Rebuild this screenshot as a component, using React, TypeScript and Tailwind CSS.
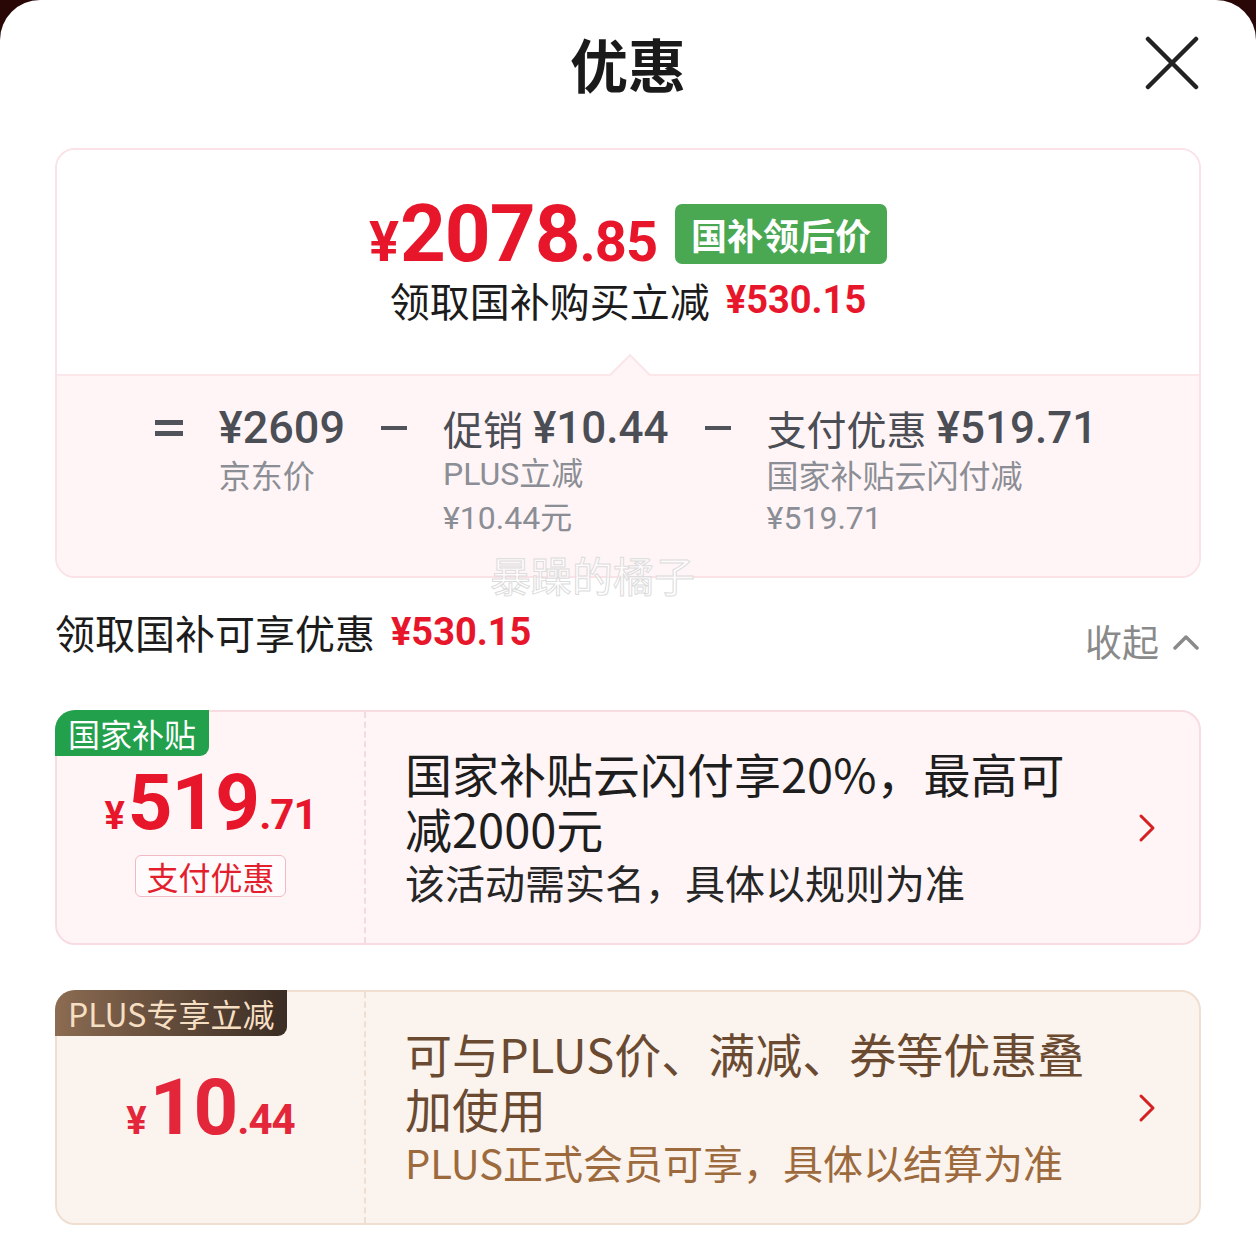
import React from "react";

const CJK = "font-['Noto_Sans_CJK_SC',sans-serif]";
const NUM = "font-['Roboto','Noto_Sans_CJK_SC',sans-serif]";

function ChevronRight() {
  return (
    <svg width="20" height="30" viewBox="0 0 20 30" className="shrink-0">
      <polyline points="4,3 16,15 4,27" fill="none" stroke="#d42020" strokeWidth="3" strokeLinecap="round" strokeLinejoin="round" />
    </svg>
  );
}

function Summary() {
  return (
    <div className="relative mx-[55px] rounded-[20px] border-2 border-[#fbe2e6]">
      {/* top: final price */}
      <div className="h-[224px] rounded-t-[18px] bg-white flex flex-col items-center pt-[44px]">
        <div className="flex items-center h-[80px]">
          <span className={`${NUM} flex items-baseline font-bold text-[#e8162b] tracking-[-1px]`}>
            <span className="text-[56px] leading-none mr-[2px]">¥</span>
            <span className="text-[80px] leading-none">2078</span>
            <span className="text-[56px] leading-none">.85</span>
          </span>
          <span className={`${CJK} ml-[18px] h-[60px] px-[16px] flex items-center rounded-[7px] bg-[#4aa852] text-white text-[36px] font-bold`}>
            国补领后价
          </span>
        </div>
        <div className={`${CJK} mt-[4px] flex items-center h-[44px] text-[40px] text-[#1c1c1c]`}>
          <span>领取国补购买立减</span>
          <span className={`${NUM} ml-[16px] font-bold text-[#e8162b] text-[38px]`}>¥530.15</span>
        </div>
      </div>

      {/* bottom: breakdown */}
      <div className="relative h-[202px] rounded-b-[18px] bg-[#fff5f6] border-t-2 border-[#fbe6ea]">
        <div className="absolute left-[558px] top-[-16px] w-[30px] h-[30px] rotate-45 bg-[#fff5f6] border-t-2 border-l-2 border-[#fbe6ea]" />
        <div className="flex justify-center gap-[36px] pt-[28px] pr-[4px]">
          <div className="h-[48px] flex flex-col justify-center gap-[6px]">
            <div className="w-[28px] h-[5px] bg-[#50535a]" />
            <div className="w-[28px] h-[5px] bg-[#50535a]" />
          </div>
          <div className="flex flex-col">
            <span className={`${NUM} h-[48px] leading-[48px] text-[45px] font-medium text-[#4b4e55]`}>¥2609</span>
            <span className={`${CJK} leading-[44px] text-[32px] text-[#8b8e95]`}>京东价</span>
          </div>
          <div className="h-[48px] flex items-center">
            <div className="w-[26px] h-[4px] bg-[#50535a]" />
          </div>
          <div className="flex flex-col">
            <span className="h-[48px] flex items-center gap-[10px] text-[#4b4e55]">
              <span className={`${CJK} text-[40px]`}>促销</span>
              <span className={`${NUM} text-[44px] font-medium`}>¥10.44</span>
            </span>
            <span className={`${NUM} leading-[44px] text-[32px] text-[#8b8e95]`}>PLUS立减</span>
            <span className={`${NUM} leading-[44px] text-[32px] text-[#8b8e95]`}>¥10.44元</span>
          </div>
          <div className="h-[48px] flex items-center">
            <div className="w-[26px] h-[4px] bg-[#50535a]" />
          </div>
          <div className="flex flex-col">
            <span className="h-[48px] flex items-center gap-[10px] text-[#4b4e55]">
              <span className={`${CJK} text-[40px]`}>支付优惠</span>
              <span className={`${NUM} text-[44px] font-medium`}>¥519.71</span>
            </span>
            <span className={`${CJK} leading-[44px] text-[32px] text-[#8b8e95]`}>国家补贴云闪付减</span>
            <span className={`${NUM} leading-[44px] text-[32px] text-[#8b8e95]`}>¥519.71</span>
          </div>
        </div>
      </div>

      {/* watermark */}
      <span className={`${CJK} absolute left-[433px] top-[394px] text-[41px] text-white/70 [-webkit-text-stroke:1px_#dcdcdc] pointer-events-none`}>
        暴躁的橘子
      </span>
    </div>
  );
}

type OfferProps = {
  theme: "gov" | "plus";
  badge: string;
  yuan: string;
  cents: string;
  tag?: string;
  title: string;
  note: string;
};

function Offer({ theme, badge, yuan, cents, tag, title, note }: OfferProps) {
  const gov = theme === "gov";
  return (
    <div
      className={`relative h-[235px] rounded-[20px] border-2 flex ${
        gov ? "bg-[#fff5f6] border-[#f8dce1]" : "bg-[#fbf3ee] border-[#f0dfd0]"
      }`}
    >
      <span
        className={`${CJK} absolute left-[-2px] top-[-2px] h-[46px] flex items-center px-[13px] rounded-tl-[20px] rounded-br-[9px] text-[32px] ${
          gov
            ? "bg-[#22a04b] text-white"
            : "bg-gradient-to-r from-[#8c6c52] to-[#3b2d24] text-[#f6dec3]"
        }`}
      >
        {badge}
      </span>
      <div
        className={`w-[309px] shrink-0 flex flex-col items-center justify-center border-r-2 border-dashed ${
          gov ? "border-[#f2dade] pt-[4px]" : "border-[#efdfd2]"
        }`}
      >
        <span className={`${NUM} flex items-baseline font-bold tracking-[-1px] ${gov ? "text-[#e8162b]" : "text-[#e3263a]"}`}>
          <span className="text-[38px] leading-none mr-[4px]">¥</span>
          <span className="text-[78px] leading-[80px]">{yuan}</span>
          <span className="text-[42px] leading-none">.{cents}</span>
        </span>
        {tag && (
          <span className={`${CJK} mt-[12px] h-[42px] px-[10px] flex items-center rounded-[6px] border border-[#f1b9c1] bg-white/50 text-[32px] text-[#e31f2e]`}>
            {tag}
          </span>
        )}
      </div>
      <div className="flex-1 flex items-center pl-[39px] pr-[42px]">
        <div className={`${CJK} w-[690px] flex flex-col`}>
          <span className={`text-[47px] leading-[55px] ${gov ? "text-[#1e1e1e]" : "text-[#6a4a30]"}`}>{title}</span>
          <span className={`text-[40px] leading-[55px] ${gov ? "text-[#262626]" : "text-[#9c6a3c]"}`}>{note}</span>
        </div>
        <div className="ml-auto">
          <ChevronRight />
        </div>
      </div>
    </div>
  );
}

export default function App() {
  return (
    <div className="bg-[#2a0707] min-h-[1245px]">
      <div className="bg-white rounded-t-[40px] min-h-[1245px] pb-[20px]">
        {/* header */}
        <div className="relative h-[126px] flex items-center justify-center">
          <h1 className={`${CJK} text-[58px] font-bold text-[#1a1a1a]`}>优惠</h1>
          <button className="absolute right-[56px] top-[35px] w-[56px] h-[56px] flex items-center justify-center">
            <svg width="54" height="54" viewBox="0 0 54 54">
              <path d="M3 3 L51 51 M51 3 L3 51" stroke="#222" strokeWidth="4.5" strokeLinecap="round" />
            </svg>
          </button>
        </div>

        {/* price summary */}
        <div className="mt-[22px]">
          <Summary />
        </div>

        {/* section header */}
        <div className="mx-[55px] mt-[32px] flex items-start justify-between">
          <div className="h-[44px] flex items-center">
            <span className={`${CJK} text-[40px] text-[#1c1c1c]`}>领取国补可享优惠</span>
            <span className={`${NUM} ml-[16px] text-[38px] font-bold text-[#e8162b]`}>¥530.15</span>
          </div>
          <div className="h-[44px] mt-[10px] flex items-center gap-[14px] pr-[2px]">
            <span className={`${CJK} text-[37px] text-[#8a8a8a]`}>收起</span>
            <svg width="26" height="16" viewBox="0 0 26 16">
              <polyline points="2,14 13,3 24,14" fill="none" stroke="#8a8a8a" strokeWidth="3.5" strokeLinecap="round" strokeLinejoin="round" />
            </svg>
          </div>
        </div>

        {/* offers */}
        <div className="mx-[55px] mt-[46px] flex flex-col gap-[45px]">
          <Offer
            theme="gov"
            badge="国家补贴"
            yuan="519"
            cents="71"
            tag="支付优惠"
            title="国家补贴云闪付享20%，最高可减2000元"
            note="该活动需实名，具体以规则为准"
          />
          <Offer
            theme="plus"
            badge="PLUS专享立减"
            yuan="10"
            cents="44"
            title="可与PLUS价、满减、券等优惠叠加使用"
            note="PLUS正式会员可享，具体以结算为准"
          />
        </div>
      </div>
    </div>
  );
}
